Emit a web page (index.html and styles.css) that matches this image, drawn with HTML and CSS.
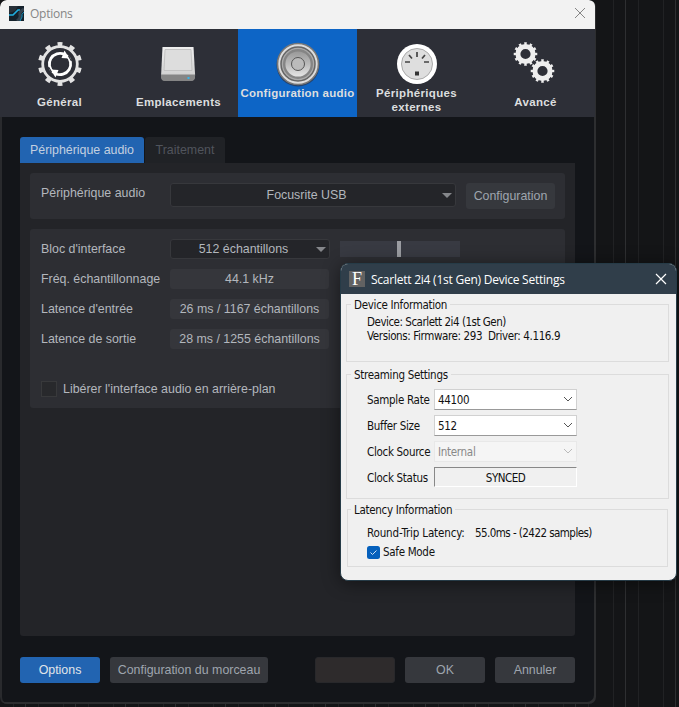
FILE: index.html
```html
<!DOCTYPE html>
<html lang="fr">
<head>
<meta charset="utf-8">
<title>Options</title>
<link rel="stylesheet" href="styles.css">
</head>
<body>
<main class="window">
  <header class="titlebar">
    <svg class="app-icon" width="15" height="15" viewBox="0 0 15 15"><rect width="15" height="15" fill="#15212b"/><path d="M0 0h9L6 5 0 7z" fill="#273039"/><path d="M0 9h4l5-5h2" fill="none" stroke="#20aee0" stroke-width="1.7"/><path d="M15 3q-5 3-4 6t-3 6" fill="none" stroke="#34424f" stroke-width="3"/><path d="M15 6q-3 2-2 5l-2 4" fill="none" stroke="#1590bd"/></svg>
    <span>Options</span>
    <svg class="close" width="12" height="12" viewBox="0 0 12 12"><path d="M1 1l10 10M11 1L1 11" stroke="#858585" stroke-width="1"/></svg>
  </header>
  <nav class="toolbar">
    <div class="tool">
      <svg width="48" height="48" viewBox="-24 -24 48 48"><g fill="none" stroke="#e3e3e3"><circle r="17.3" stroke-width="2.8"/><circle r="19.800" stroke-width="4.400" pathLength="100" stroke-dasharray="4 6" stroke-dashoffset="2" transform="rotate(-90)"/><path d="M-6.500 8.500A10.700 10.700 0 0 1 4.500 -9.700M6.500 -8.500A10.700 10.700 0 0 1 -4.500 9.700" stroke="#fff" stroke-width="2.800"/></g><path d="M4.500 -13.500L9.500 -5.500 1.500-6zM-4.500 13.500L-9.500 5.500 -1.500 6z" fill="#fff"/><path d="M8.500 -8l3 5M-8.500 8l-3-5" stroke="#2d2f37" stroke-width="1.200"/></svg>
      <span>Général</span>
    </div>
    <div class="tool">
      <svg width="48" height="48" viewBox="0 0 48 48"><defs><linearGradient id="disk" x2="0" y2="1"><stop stop-color="#eee"/><stop offset="1" stop-color="#ccc"/></linearGradient></defs><path d="M7.500 7h31l1.600 28q0 5.500-4 5.500h-26q-4 0-4-5.500z" fill="url(#disk)"/><path d="M6 34.500h34v2q0 4.500-4 4.500H10q-4 0-4-4.500z" fill="#858585"/><path d="M10 9.500h26l1 21H9z" fill="#ddd" stroke="#bbb" stroke-width=".8"/><rect x="32.500" y="37" width="2" height="2" fill="#36b5ea"/></svg>
      <span>Emplacements</span>
    </div>
    <div class="tool active">
      <svg width="48" height="48" viewBox="-24 -24 48 48"><defs><linearGradient id="cone" x2="0" y2="1"><stop stop-color="#999"/><stop offset=".5" stop-color="#bbb"/><stop offset="1" stop-color="#e5e5e5"/></linearGradient></defs><circle cy="1" r="21.500" fill="#25436d"/><circle r="20.500" fill="#ddd" stroke="#777" stroke-width="1.600"/><circle r="17" fill="#aaa" stroke="#666" stroke-width="1.500"/><circle r="15" fill="#858585"/><circle r="12.600" fill="url(#cone)"/><circle r="6.500" fill="#bbb" stroke="#555"/></svg>
      <span>Configuration audio</span>
    </div>
    <div class="tool double">
      <svg width="48" height="48" viewBox="-24 -24 48 48"><circle r="20" fill="#fff"/><circle r="15.500" fill="#dedede" stroke="#aaa"/><path d="M0-12v5M-8-9l3 3.500M8-9L5-5.500M-12-2h5M12-2H7" stroke="#444" stroke-width="1.700"/><rect x="-2" y="7.500" width="4" height="4" fill="#333"/></svg>
      <span>Périphériques<br>externes</span>
    </div>
    <div class="tool">
      <svg width="48" height="48" viewBox="0 0 48 48"><g fill="none" stroke="#eee"><g transform="translate(13.500 14)"><circle r="7.600" stroke-width="5"/><circle r="10.300" stroke-width="3" pathLength="120" stroke-dasharray="4.600 5.400" stroke-dashoffset="2.300"/></g><g transform="translate(30.500 31)"><circle r="7.600" stroke-width="5"/><circle r="10.300" stroke-width="3" pathLength="120" stroke-dasharray="4.600 5.400" stroke-dashoffset="2.300"/></g></g></svg>
      <span>Avancé</span>
    </div>
  </nav>
  <section class="content">
    <div class="tabs"><div class="tab selected"><span>Périphérique audio</span></div><div class="tab"><span>Traitement</span></div></div>
    <div class="page">
      <div class="card device">
        <label>Périphérique audio</label><div class="select wide"><span>Focusrite USB</span><i></i></div><button class="config">Configuration</button>
      </div>
      <div class="card block">
        <div class="row"><label>Bloc d'interface</label><div class="select"><span>512 échantillons</span><i></i></div><div class="slider"><b></b></div></div>
        <div class="row"><label>Fréq. échantillonnage</label><div class="value">44.1 kHz</div></div>
        <div class="row"><label>Latence d'entrée</label><div class="value">26 ms / 1167 échantillons</div></div>
        <div class="row"><label>Latence de sortie</label><div class="value">28 ms / 1255 échantillons</div></div>
        <div class="release"><i></i><span>Libérer l'interface audio en arrière-plan</span></div>
      </div>
    </div>
    <footer class="actions"><button class="primary">Options</button><button class="song">Configuration du morceau</button><button class="blank"></button><button>OK</button><button>Annuler</button></footer>
  </section>
</main>
<aside class="dialog">
  <header class="dialog-title"><span class="f-icon">F</span><span class="name">Scarlett 2i4 (1st Gen) Device Settings</span><svg width="12" height="12" viewBox="0 0 12 12"><path d="M1 1l10 10M11 1L1 11" stroke="#fff" stroke-width="1.200"/></svg></header>
  <section class="group info"><h2>Device Information</h2><p>Device: Scarlett 2i4 (1st Gen)</p><p class="versions">Versions: Firmware: 293&nbsp; Driver: 4.116.9</p></section>
  <section class="group stream"><h2>Streaming Settings</h2>
    <div class="field"><label>Sample Rate</label><div class="combo"><span>44100</span><svg width="10" height="6" viewBox="0 0 10 6"><path d="M1 1l4 4 4-4"/></svg></div></div>
    <div class="field"><label>Buffer Size</label><div class="combo"><span>512</span><svg width="10" height="6" viewBox="0 0 10 6"><path d="M1 1l4 4 4-4"/></svg></div></div>
    <div class="field"><label>Clock Source</label><div class="combo disabled"><span>Internal</span><svg width="10" height="6" viewBox="0 0 10 6"><path d="M1 1l4 4 4-4"/></svg></div></div>
    <div class="field"><label>Clock Status</label><div class="status">SYNCED</div></div>
  </section>
  <section class="group latency"><h2>Latency Information</h2><p class="trip"><span>Round-Trip Latency:</span><span class="samples">55.0ms - (2422 samples)</span></p><div class="safe"><svg width="13" height="13" viewBox="0 0 13 13"><rect width="13" height="13" rx="2.500" fill="#0560bc"/><path d="M3.500 6.500l2 2 4-4" fill="none" stroke="#cde2f6"/></svg><span>Safe Mode</span></div></section>
</aside>
</body>
</html>
```

FILE: styles.css
```css
* { box-sizing: border-box; }
body { margin: 0; width: 679px; height: 707px; overflow: hidden; position: relative; background: repeating-linear-gradient(90deg, #141517 0 13px, #212224 13px 14px, #141517 14px 25px, #2e2f31 25px 26px, #141517 26px 38px, #212224 38px 39px, #141517 39px 50px); font: 12.4px "Liberation Sans", sans-serif; color: #b3b7bd; }
h2, p { margin: 0; font: inherit; }
button { font: inherit; padding: 0; border: 0; border-radius: 3px; color: #9fa5ae; background: #36383d; white-space: nowrap; }
.window { width: 596px; height: 704px; border-radius: 7px; overflow: hidden; background: #131519; box-shadow: inset -2px -2px #2d2e30, inset 2px 0 #292a2d; }
.titlebar { height: 29px; background: #f2f2f2; width: 595px; display: flex; align-items: center; padding: 0 9px; color: #858585; font: 12px "Open Sans", sans-serif; letter-spacing: -.25px; border-radius: 6px 6px 0 0; }
.titlebar span { margin: -2px 0 0 6px; }
.app-icon { margin-top: -3px; }
.close { margin-left: auto; margin-top: -3px; }
.toolbar { height: 88px; width: 595px; display: grid; grid-template-columns: repeat(5, 119px); background: #2d2f37; color: #dcdedf; font: bold 11.5px/14px "Liberation Sans", sans-serif; }
.tool { display: flex; flex-direction: column; align-items: center; padding-top: 11px; text-align: center; white-space: nowrap; }
.tool svg { flex: none; }
.tool span { margin-top: 7px; letter-spacing: .33px; }
.tool.active { background: #0d65c6; }
.tool.active span { margin-top: -2px; letter-spacing: .25px; }
.tool.double span { margin-top: -2px; }
.content { padding: 20px 20px 0; width: 595px; }
.tabs { display: flex; height: 26px; gap: 1px; }
.tab { width: 80px; display: flex; justify-content: center; align-items: center; border-radius: 3px 3px 0 0; background: #202226; color: #50545c; }
.tab.selected { width: 124px; background: #2264b1; color: #c3d0e0; }
.page { height: 473px; padding: 10px; background: #232428; border-radius: 0 0 3px 3px; display: flex; flex-direction: column; gap: 10px; }
.card { background: #2d2e33; border-radius: 3px; width: 535px; padding-left: 11px; }
.device { height: 46px; display: flex; padding-top: 10px; }
.device label { width: 129px; padding-top: 3px; white-space: nowrap; }
.select { width: 160px; height: 20px; border: 1px solid #37383c; border-radius: 3px; background: #242529; display: flex; align-items: center; padding-right: 3px; }
.select span { flex: 1; text-align: center; }
.select i { border: 5px solid transparent; border-top-color: #85878b; border-bottom: 0; }
.select.wide { width: 286px; height: 24px; margin-right: 10px; }
.config { width: 89px; height: 26px; }
.block { height: 179px; padding-top: 5px; }
.row { height: 30px; display: flex; align-items: center; }
.row label { width: 129px; white-space: nowrap; flex: none; }
.value { width: 159px; height: 20px; border-radius: 3px; background: #35363b; text-align: center; line-height: 20px; white-space: nowrap; }
.slider { margin-left: 10px; width: 120px; height: 16px; padding-left: 57px; background: #383a42; }
.slider b { display: block; width: 4px; height: 16px; background: #9b9da2; }
.release { height: 30px; margin-top: 20px; display: flex; align-items: center; }
.release i { width: 16px; height: 16px; border: 1px solid #38393b; background: #28292c; margin-right: 6px; }
.actions { display: flex; margin-top: 21px; height: 26px; }
.actions button { width: 80px; margin-left: 10px; }
.actions .primary { margin-left: 0; background: #2264b1; color: #e0e4ea; }
.actions .song { width: 158px; }
.actions .blank { margin-left: 47px; background: #2e2b2c; border: 1px solid #28282b; }
.dialog { position: absolute; left: 340px; top: 263px; width: 337px; height: 318px; border: 1px solid #263b47; border-radius: 8px; overflow: hidden; background: #f0f0f0; color: #111; font: 11.5px/14px "DejaVu Sans Condensed", "DejaVu Sans", sans-serif; font-stretch: condensed; letter-spacing: -.3px; box-shadow: 0 2px 18px #0007; }
.dialog-title { height: 30px; background: #303e4a; color: #fff; display: flex; align-items: center; padding: 0 9px 0 8px; font: 12px "Open Sans", sans-serif; letter-spacing: -.24px; }
.dialog-title svg { margin-left: auto; }
.f-icon { width: 16px; height: 16px; background: #626262; font: 18px/17px "Liberation Serif", serif; text-align: center; margin-right: 6px; }
.group { border: 1px solid #dcdcdc; margin: 10px 7px 0 5px; padding: 0 20px; white-space: nowrap; }
.group h2 { width: max-content; height: 14px; padding: 0 3px; margin: -7px 0 0 -16px; background: #f0f0f0; }
.info { height: 58px; }
.info p { margin-top: 3px; letter-spacing: -.48px; }
.info .versions { margin-top: 0; letter-spacing: -.38px; }
.stream { height: 125px; margin-top: 12px; }
.field { display: flex; height: 26px; align-items: center; }
.field:first-of-type { margin-top: 4px; }
.field label { width: 67px; flex: none; padding-top: 1px; }
.combo { width: 143px; height: 21px; background: #fff; border: 1px solid #d1d1d1; border-bottom-color: #999; display: flex; align-items: center; justify-content: space-between; padding: 0 3px; }
.combo span { padding-top: 1px; }
.combo path { fill: none; stroke: #555; }
.disabled { background: #f5f5f5; border-color: #e8e8e8; color: #888; }
.disabled path { stroke: #bbb; }
.status { width: 143px; height: 20px; border: 1px solid #fff; border-top-color: #888; border-left-color: #888; text-align: center; line-height: 20px; letter-spacing: -.5px; }
.latency { height: 58px; margin: 10px 8px 0 6px; padding-left: 19px; }
.trip { margin-top: 9px; display: flex; letter-spacing: -.15px; }
.trip span:first-child { width: 108px; }
.trip .samples { letter-spacing: -.55px; }
.safe { margin-top: 5px; display: flex; align-items: center; gap: 3px; }
```
